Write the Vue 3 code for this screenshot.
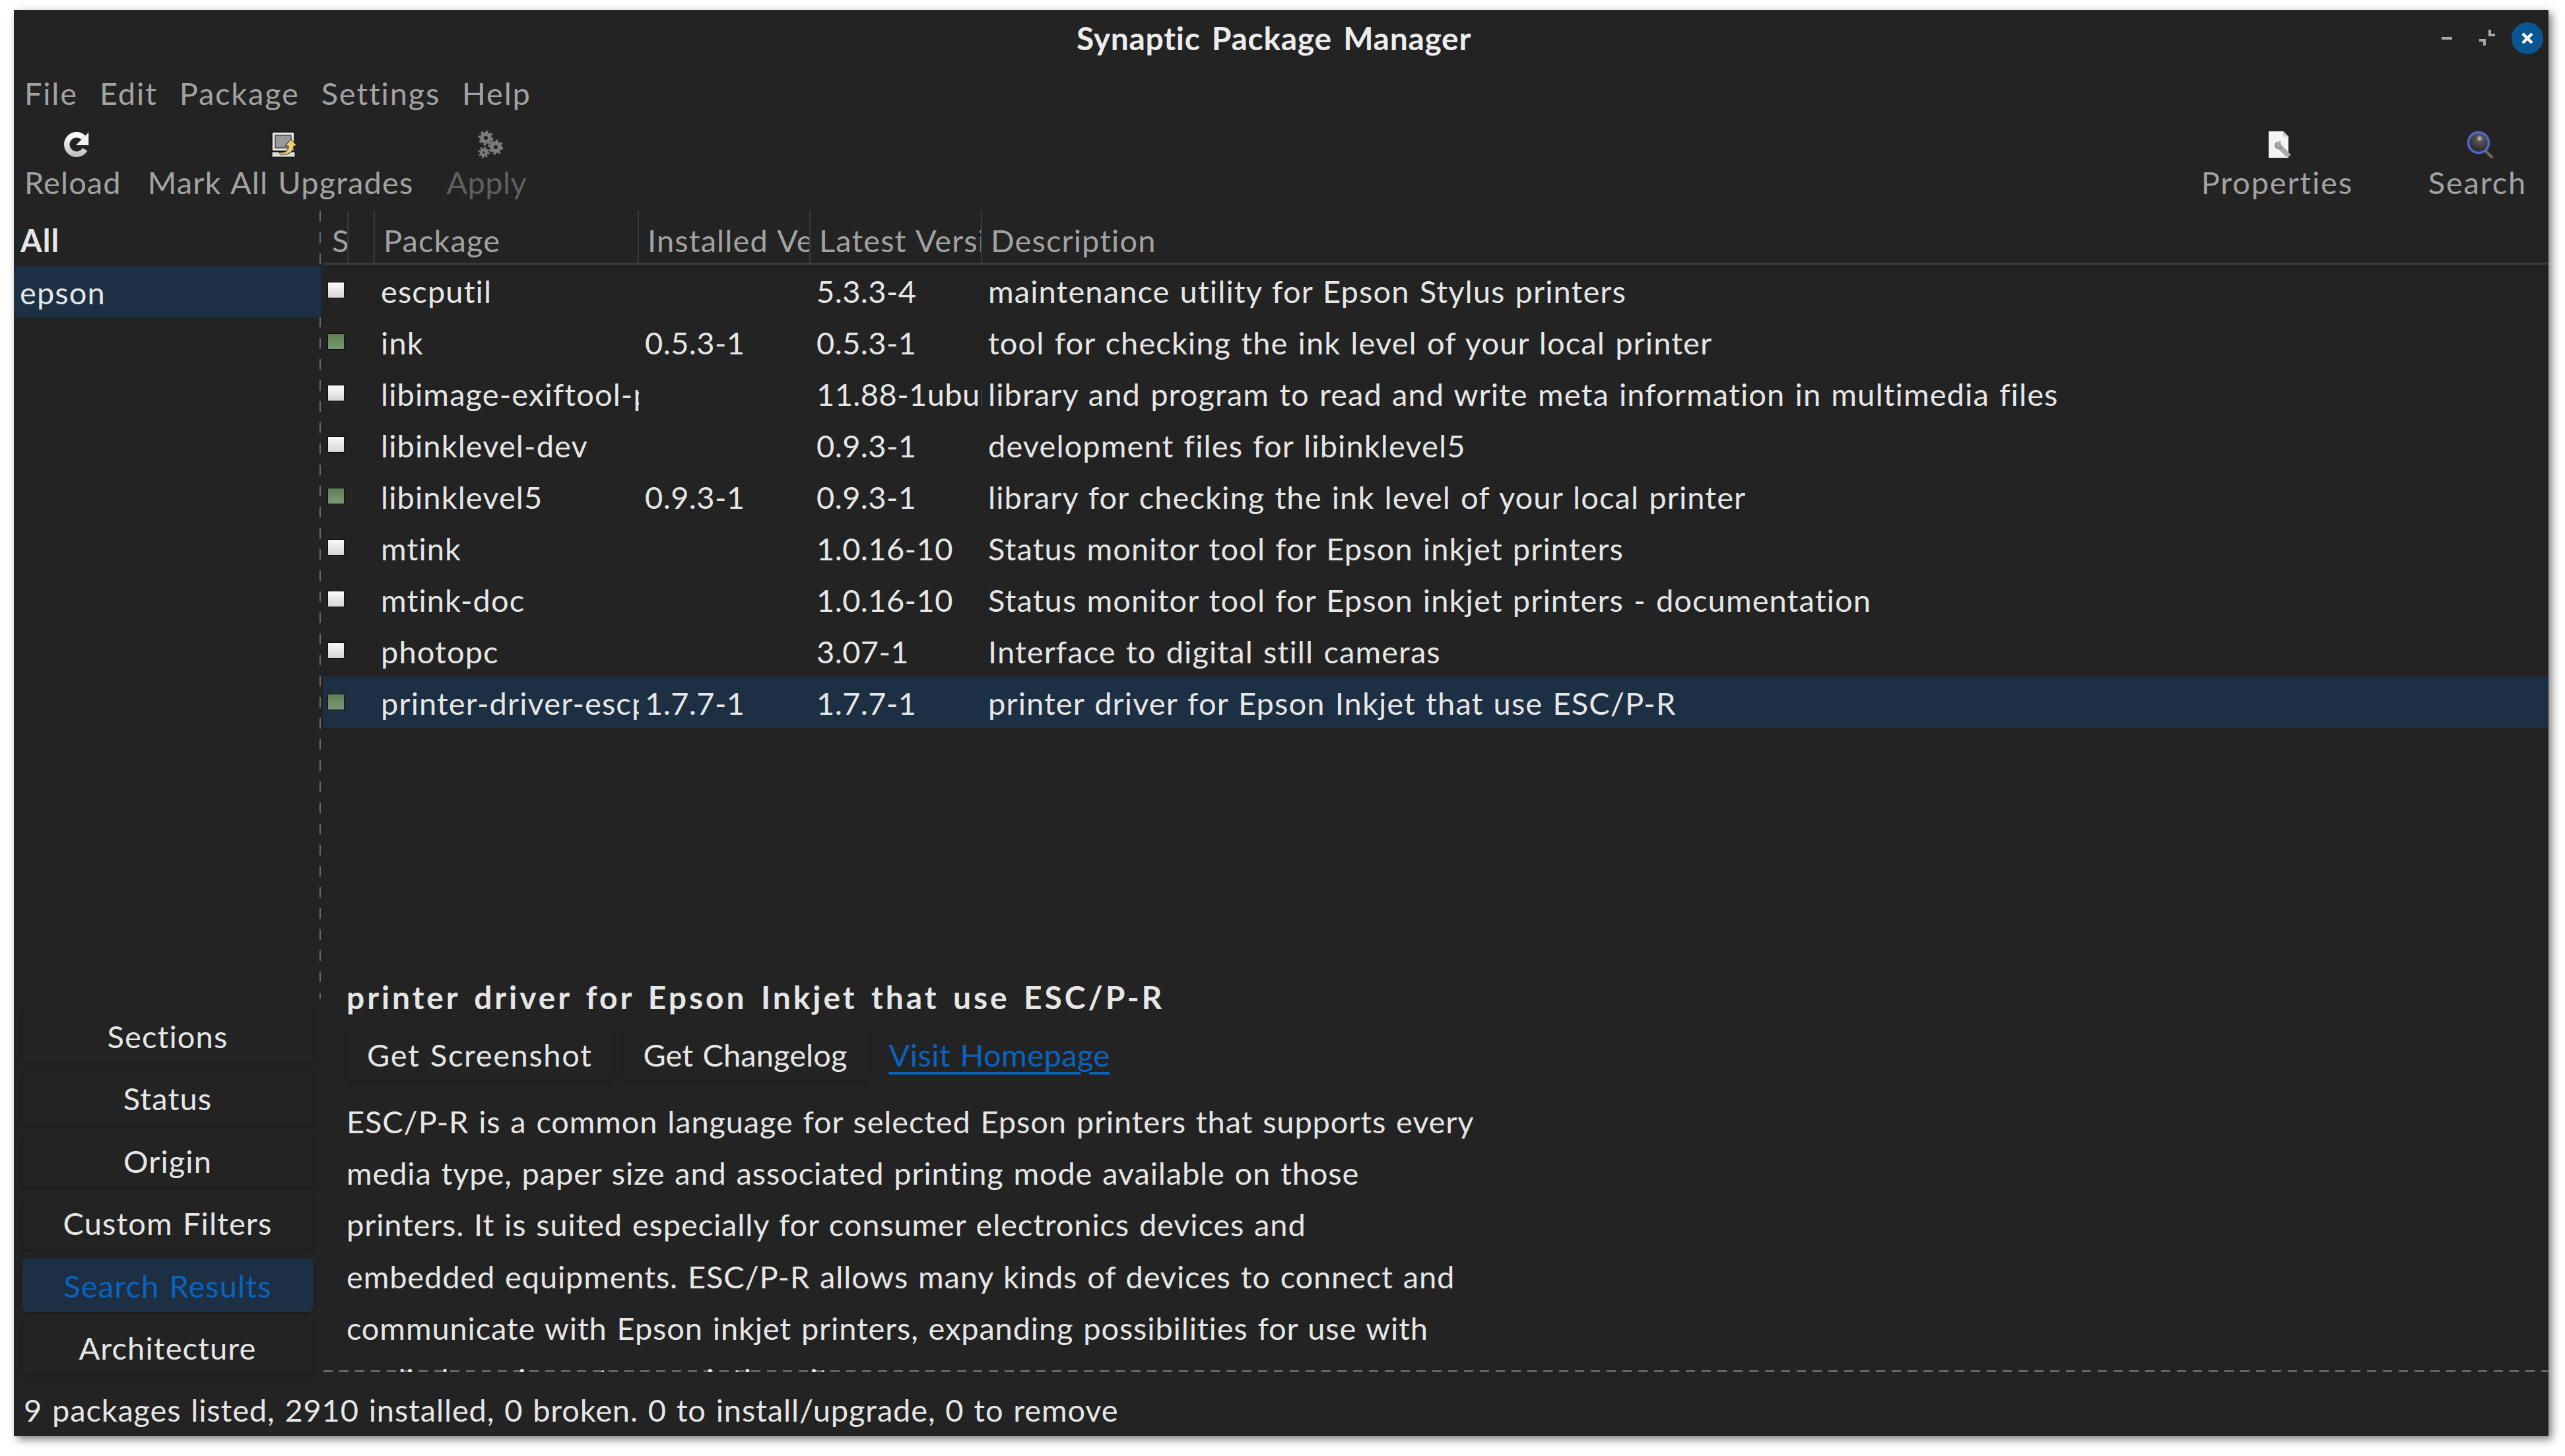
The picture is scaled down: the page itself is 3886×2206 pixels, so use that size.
<script setup>
const menus = ['File', 'Edit', 'Package', 'Settings', 'Help']

const packages = [
  { name: 'escputil', installed: '', latest: '5.3.3-4', desc: 'maintenance utility for Epson Stylus printers' },
  { name: 'ink', installed: '0.5.3-1', latest: '0.5.3-1', desc: 'tool for checking the ink level of your local printer' },
  { name: 'libimage-exiftool-perl', installed: '', latest: '11.88-1ubuntu1', desc: 'library and program to read and write meta information in multimedia files' },
  { name: 'libinklevel-dev', installed: '', latest: '0.9.3-1', desc: 'development files for libinklevel5' },
  { name: 'libinklevel5', installed: '0.9.3-1', latest: '0.9.3-1', desc: 'library for checking the ink level of your local printer' },
  { name: 'mtink', installed: '', latest: '1.0.16-10', desc: 'Status monitor tool for Epson inkjet printers' },
  { name: 'mtink-doc', installed: '', latest: '1.0.16-10', desc: 'Status monitor tool for Epson inkjet printers - documentation' },
  { name: 'photopc', installed: '', latest: '3.07-1', desc: 'Interface to digital still cameras' },
  { name: 'printer-driver-escpr', installed: '1.7.7-1', latest: '1.7.7-1', desc: 'printer driver for Epson Inkjet that use ESC/P-R', selected: true }
]

const filters = ['Sections', 'Status', 'Origin', 'Custom Filters', 'Search Results', 'Architecture']

const descLines = [
  'ESC/P-R is a common language for selected Epson printers that supports every',
  'media type, paper size and associated printing mode available on those',
  'printers. It is suited especially for consumer electronics devices and',
  'embedded equipments. ESC/P-R allows many kinds of devices to connect and',
  'communicate with Epson inkjet printers, expanding possibilities for use with',
  'applied services at our printing site'
]
</script>

<template>
  <div class="page">
    <div class="window">
      <header class="titlebar">
        <span></span>
        <h1 class="title">Synaptic Package Manager</h1>
        <div class="win-controls">
          <span class="win-min"></span>
          <svg class="win-restore" width="26" height="26" viewBox="0 0 26 26">
            <path d="M15 0h4v6h6v4H15zM1 14h10v10H7v-6H1z" fill="#a8a8a8"/>
          </svg>
          <span class="win-close">
            <svg width="20" height="20" viewBox="0 0 20 20">
              <path d="M3 3l14 14M17 3L3 17" stroke="#fff" stroke-width="4.5" fill="none"/>
            </svg>
          </span>
        </div>
      </header>

      <nav class="menubar">
        <span v-for="m in menus" :key="m">{{ m }}</span>
      </nav>

      <div class="toolbar">
        <div class="tool-group">
          <div class="tool">
            <svg width="40" height="40" viewBox="0 0 38 38">
              <defs>
                <linearGradient id="reloadGrad" x1="0" y1="0" x2="0" y2="1">
                  <stop offset="0" stop-color="#fff"/>
                  <stop offset="1" stop-color="#c4c4c4"/>
                </linearGradient>
              </defs>
              <path d="M28.9 9.1A14 14 0 1 0 31.1 26" fill="none" stroke="url(#reloadGrad)" stroke-width="8"/>
              <path d="M36.3 1.7V20H18z" fill="#f2f2f2"/>
            </svg>
            <span>Reload</span>
          </div>
          <div class="tool">
            <svg width="40" height="40" viewBox="0 0 40 40">
              <rect x="1" y="1" width="34" height="29" rx="2" fill="#e4e4e4" stroke="#111" stroke-width="1.5"/>
              <rect x="6" y="6" width="24" height="19" fill="#9a9a9a" stroke="#444" stroke-width="1.5"/>
              <rect x="1" y="31" width="35" height="8" fill="#dcdcdc" stroke="#111" stroke-width="1"/>
              <path d="M30 12l9 10h-5c0 9-7 14-20 13l-2-3c9 1 14-2 14-10h-5z" fill="#f0cf72" stroke="#1a1a1a" stroke-width="1"/>
            </svg>
            <span>Mark All Upgrades</span>
          </div>
          <div class="tool tool-off">
            <svg width="38" height="42" viewBox="0 0 38 42">
              <g fill="none" stroke="#7c7c7c">
                <circle cx="12" cy="11" r="6" stroke-width="6"/>
                <circle cx="12" cy="11" r="10" stroke-width="3" stroke-dasharray="3.6 4.2"/>
                <circle cx="27" cy="25" r="6" stroke-width="6"/>
                <circle cx="27" cy="25" r="10" stroke-width="3" stroke-dasharray="3.6 4.2"/>
                <circle cx="9" cy="33" r="4" stroke-width="4.5"/>
                <circle cx="9" cy="33" r="7.5" stroke-width="2.5" stroke-dasharray="2.8 3.1"/>
              </g>
            </svg>
            <span>Apply</span>
          </div>
        </div>
        <div class="tool-group tool-group-right">
          <div class="tool">
            <svg width="40" height="42" viewBox="0 0 40 42">
              <path d="M1 1h22l8 8v32H1z" fill="#f4f4f4"/>
              <path d="M23 1v8h8z" fill="#cfcfcf"/>
              <path d="M13 18l-1 6 16 16 7-3-15-16-1-6z" fill="#a9a9a9"/>
              <path d="M14 17c-3 2-4 7-1 9s6 1 7-1" fill="none" stroke="#8c8c8c" stroke-width="2"/>
            </svg>
            <span>Properties</span>
          </div>
          <div class="tool">
            <svg width="44" height="42" viewBox="0 0 44 42">
              <defs>
                <radialGradient id="lensGrad" cx="0.55" cy="0.3" r="0.8">
                  <stop offset="0" stop-color="#cfcfcf"/>
                  <stop offset="0.2" stop-color="#555"/>
                  <stop offset="1" stop-color="#1b1b1b"/>
                </radialGradient>
              </defs>
              <path d="M26 28l12 12" stroke="#6e655a" stroke-width="4.5" stroke-linecap="round"/>
              <circle cx="18" cy="18" r="15.5" fill="url(#lensGrad)" stroke="#5566cc" stroke-width="3.5"/>
            </svg>
            <span>Search</span>
          </div>
        </div>
      </div>

      <main class="content">
        <aside class="side">
          <div class="side-list">
            <div class="side-head">All</div>
            <div class="side-item">epson</div>
          </div>
          <div class="side-filters">
            <button
              v-for="f in filters"
              :key="f"
              class="filter"
              :class="{ active: f === 'Search Results' }"
            >{{ f }}</button>
          </div>
        </aside>

        <section class="right">
          <div class="table">
            <div class="thead">
              <div class="th">S</div>
              <div class="th"></div>
              <div class="th">Package</div>
              <div class="th">Installed Version</div>
              <div class="th">Latest Version</div>
              <div class="th">Description</div>
            </div>
            <div
              v-for="p in packages"
              :key="p.name"
              class="tr"
              :class="{ selected: p.selected }"
            >
              <div class="td-check">
                <span class="check" :class="{ on: p.installed }"></span>
              </div>
              <div class="td">{{ p.name }}</div>
              <div class="td ver">{{ p.installed }}</div>
              <div class="td ver">{{ p.latest }}</div>
              <div class="td">{{ p.desc }}</div>
            </div>
          </div>

          <div class="detail">
            <h2 class="detail-title">printer driver for Epson Inkjet that use ESC/P-R</h2>
            <div class="detail-actions">
              <button class="action">Get Screenshot</button>
              <button class="action action-tight">Get Changelog</button>
              <a class="link">Visit Homepage</a>
            </div>
            <div class="detail-text">
              <p v-for="line in descLines" :key="line">{{ line }}</p>
            </div>
          </div>
        </section>
      </main>

      <footer class="status">9 packages listed, 2910 installed, 0 broken. 0 to install/upgrade, 0 to remove</footer>
    </div>
  </div>
</template>

<style>
html, body {
  margin: 0;
  background: #fff;
  overflow: hidden;
}
</style>

<style scoped>
.page {
  width: 3886px;
  height: 2206px;
  padding: 15px 25px 30px 21px;
  box-sizing: border-box;
}

.window {
  height: 100%;
  display: flex;
  flex-direction: column;
  background: #232323;
  color: #e6e6e6;
  font-family: Lato, "Open Sans", sans-serif;
  font-size: 47px;
  letter-spacing: 1.1px;
  word-spacing: 2px;
  box-shadow: 5px 5px 12px rgba(0, 0, 0, 0.5);
}

.titlebar {
  height: 85px;
  flex: none;
  display: grid;
  grid-template-columns: 1fr auto 1fr;
  align-items: center;
}

.title {
  margin: 0 22px 0 0;
  font-size: 48px;
  font-weight: 700;
  word-spacing: 5px;
  letter-spacing: 0.7px;
  color: #ececec;
}

.win-controls {
  display: flex;
  justify-content: flex-end;
  align-items: center;
  padding-right: 8px;
}

.win-min {
  width: 16px;
  height: 4px;
  background: #a8a8a8;
  margin-right: 40px;
}

.win-restore {
  margin-right: 24px;
}

.win-close {
  width: 48px;
  height: 48px;
  border-radius: 50%;
  background: #0a5592;
  display: flex;
  align-items: center;
  justify-content: center;
}

.menubar {
  height: 82px;
  flex: none;
  display: flex;
  align-items: center;
  gap: 33px;
  padding-left: 16px;
  color: #a2a2a2;
  letter-spacing: 1.8px;
}

.toolbar {
  height: 138px;
  flex: none;
  display: flex;
  justify-content: space-between;
  color: #a2a2a2;
}

.tool-group {
  display: flex;
  gap: 8px;
}

.tool-group-right {
  gap: 82px;
  padding-right: 17px;
  letter-spacing: 1.8px;
}

.tool {
  padding: 0 16px;
  display: flex;
  flex-direction: column;
  align-items: center;
}

.tool svg {
  margin: 16px 0 0 12px;
  height: 42px;
}

.tool span {
  margin-top: 6px;
  line-height: 60px;
}

.tool-off {
  margin-left: 10px;
  letter-spacing: 0.4px;
  color: #5f5f5f;
}

.content {
  flex: 1;
  min-height: 0;
  display: flex;
}

.side {
  width: 465px;
  flex: none;
  display: flex;
  flex-direction: column;
}

.side-list {
  flex: 1;
  background: linear-gradient(#6a6a6a 50%, transparent 50%) right top / 2px 32px repeat-y;
}

.side-head {
  height: 83px;
  padding-left: 10px;
  line-height: 88px;
  font-weight: 700;
}

.side-item {
  height: 78px;
  padding-left: 9px;
  line-height: 80px;
  background: #1c2f43;
}

.side-filters {
  display: flex;
  flex-direction: column;
  gap: 12.5px;
  padding: 15px 11px 12px 12px;
}

.filter {
  height: 82px;
  padding: 2px 0 0;
  border: none;
  border-radius: 8px;
  background: #232323;
  color: inherit;
  font: inherit;
  letter-spacing: inherit;
  word-spacing: inherit;
  box-shadow: 0 2px 4px rgba(0, 0, 0, 0.25);
}

.filter.active {
  background: #1c2f43;
  color: #0a63bf;
}

.right {
  flex: 1;
  min-width: 0;
  display: flex;
  flex-direction: column;
  padding-left: 4px;
}

.table {
  flex: 1;
  min-height: 0;
}

.thead,
.tr {
  display: grid;
  grid-template-columns: 38px 40px 400px 260px 260px 1fr;
}

.tr {
  grid-template-columns: 78px 400px 260px 260px 1fr;
  height: 78px;
  line-height: 80px;
}

.tr.selected {
  background: #1c2f43;
}

.thead {
  box-sizing: border-box;
  height: 81px;
  border-bottom: 3px solid #3a3a3a;
  color: #a2a2a2;
}

.th {
  overflow: hidden;
  white-space: nowrap;
  padding-left: 13px;
  line-height: 88px;
  border-right: 2px solid #3a3a3a;
  box-sizing: border-box;
}

.th:last-child {
  border-right: none;
}

.td {
  overflow: hidden;
  white-space: nowrap;
  padding-left: 9px;
}

.ver {
  letter-spacing: 0.4px;
}

.td-check {
  position: relative;
}

.check {
  position: absolute;
  left: 6px;
  top: 26px;
  width: 26px;
  height: 25px;
  box-sizing: border-box;
  border: 1px solid #0e0e0e;
  border-radius: 2px;
  background: linear-gradient(#fafafa, #d6d6d6);
}

.check.on {
  background: linear-gradient(#5f7e57, #7a9a72);
}

.detail {
  flex: none;
  height: 603px;
  margin-bottom: 15px;
  padding-left: 35px;
  overflow: hidden;
  box-sizing: border-box;
  background: linear-gradient(90deg, #666 60%, transparent 60%) left bottom / 24px 3px repeat-x;
}

.detail-title {
  margin: 0;
  height: 82px;
  line-height: 70px;
  font-size: 48px;
  font-weight: 700;
  letter-spacing: 3.9px;
  word-spacing: 6px;
}

.detail-actions {
  display: flex;
  align-items: center;
  gap: 15px;
  height: 80px;
  letter-spacing: 1.6px;
}

.action {
  height: 80px;
  padding: 0 31px;
  border: none;
  border-radius: 8px;
  background: #232323;
  color: inherit;
  font: inherit;
  letter-spacing: inherit;
  word-spacing: inherit;
  box-shadow: 0 2px 4px rgba(0, 0, 0, 0.25);
}

.action-tight {
  letter-spacing: 0.1px;
}

.link {
  margin-left: 17px;
  color: #0a63bf;
  letter-spacing: 0.4px;
  text-decoration: underline;
  text-decoration-thickness: 4px;
  text-underline-offset: 8px;
}

.detail-text {
  margin-top: 22px;
  letter-spacing: 0.85px;
}

.detail-text p {
  margin: 0;
  height: 78.2px;
  line-height: 78px;
  white-space: nowrap;
}

.status {
  flex: none;
  height: 82px;
  padding-left: 15px;
  line-height: 84px;
  letter-spacing: 0.85px;
}
</style>
